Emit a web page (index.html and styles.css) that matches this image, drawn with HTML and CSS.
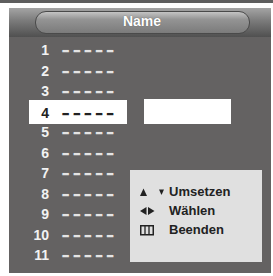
FILE: index.html
```html
<!DOCTYPE html>
<html>
<head>
<meta charset="utf-8">
<link rel="stylesheet" href="styles.css">
</head>
<body>
<div class="topline"></div>
<div class="panel">
  <div class="header"><div class="pill">Name</div></div>
  <div class="body">
    <ul class="list">
      <li class="row"><span class="num">1</span><span class="dash">–––––</span></li>
      <li class="row"><span class="num">2</span><span class="dash">–––––</span></li>
      <li class="row"><span class="num">3</span><span class="dash">–––––</span></li>
      <li class="row sel"><span class="num">4</span><span class="dash">–––––</span></li>
      <li class="row"><span class="num">5</span><span class="dash">–––––</span></li>
      <li class="row"><span class="num">6</span><span class="dash">–––––</span></li>
      <li class="row"><span class="num">7</span><span class="dash">–––––</span></li>
      <li class="row"><span class="num">8</span><span class="dash">–––––</span></li>
      <li class="row"><span class="num">9</span><span class="dash">–––––</span></li>
      <li class="row"><span class="num">10</span><span class="dash">–––––</span></li>
      <li class="row"><span class="num">11</span><span class="dash">–––––</span></li>
    </ul>
    <div class="side">
      <div class="input"></div>
      <div class="legend">
        <div class="lrow">
          <span class="ico">
            <svg width="29" height="10" viewBox="0 0 29 10"><polygon points="0,9 3.5,1.5 7,9" fill="#222"/><polygon points="19,2.5 24,2.5 21.5,8" fill="#222"/></svg>
          </span><span>Umsetzen</span>
        </div>
        <div class="lrow">
          <span class="ico">
            <svg width="29" height="10" viewBox="0 0 29 10"><polygon points="0,5 6.5,1 6.5,9" fill="#222"/><polygon points="8,1 14.5,5 8,9" fill="#222"/></svg>
          </span><span>Wählen</span>
        </div>
        <div class="lrow">
          <span class="ico">
            <svg width="29" height="12" viewBox="0 0 29 12"><rect x="0.75" y="1.75" width="12.5" height="9" fill="none" stroke="#222" stroke-width="1.5"/><line x1="5" y1="2" x2="5" y2="11" stroke="#222" stroke-width="1.3"/><line x1="9" y1="2" x2="9" y2="11" stroke="#222" stroke-width="1.3"/></svg>
          </span><span>Beenden</span>
        </div>
      </div>
    </div>
  </div>
</div>
</body>
</html>
```
FILE: styles.css
```css
html, body {
  margin: 0;
  padding: 0;
  background: #ffffff;
  width: 273px;
  height: 276px;
  overflow: hidden;
  font-family: "Liberation Sans", Arial, sans-serif;
}
.topline {
  height: 3px;
  background: #5e5e5e;
}
.panel {
  margin: 5px 2px 0 9px;
  width: 262px;
  height: 265px;
  background: #646262;
  display: flex;
  flex-direction: column;
}
.header {
  height: 29px;
  background: linear-gradient(to bottom, #a4a4a4 0%, #7a7a7a 45%, #505050 100%);
  display: flex;
  align-items: center;
  justify-content: center;
  padding-left: 4px;
}
.pill {
  width: 213px;
  height: 21px;
  border-radius: 11px;
  border: 1px solid #4a4a4a;
  background: linear-gradient(to bottom, #c4c4c4 0%, #949494 35%, #7b7b7b 100%);
  color: #ffffff;
  font-weight: bold;
  font-size: 14px;
  text-align: center;
  line-height: 19px;
  text-shadow: 0 0 1px #555;
}
.body {
  display: flex;
  flex: 1;
}
.list {
  list-style: none;
  margin: 0;
  padding: 3px 0 0 0;
  width: 121px;
}
.row {
  height: 20.5px;
  line-height: 20.5px;
  display: flex;
  align-items: center;
  color: #f2f2f2;
  font-weight: bold;
  font-size: 14px;
}
.row.sel {
  background: #ffffff;
  color: #222222;
  margin: -1.5px 0 -2px 20px;
  height: 24px;
  width: 98px;
  padding-top: 1.5px;
  box-sizing: border-box;
}
.num {
  width: 40px;
  text-align: right;
  box-sizing: border-box;
}
.sel .num {
  width: 20px;
}
.dash {
  margin-left: 13px;
  font-size: 13px;
  letter-spacing: 3.9px;
  color: #e4e4e4;
  text-shadow: 0 0.7px 0 #e4e4e4;
}
.sel .dash {
  color: #222222;
  text-shadow: 0 0.7px 0 #222222;
}
.side {
  display: flex;
  flex-direction: column;
  width: 132px;
}
.input {
  margin: 62px 0 0 14px;
  width: 87px;
  height: 25px;
  background: #ffffff;
}
.legend {
  margin-top: 46px;
  width: 132px;
  height: 92px;
  background: #e0e0e0;
  box-sizing: border-box;
  padding: 12px 0 0 10px;
  color: #222222;
  font-weight: bold;
  font-size: 13px;
}
.lrow {
  height: 19px;
  line-height: 19px;
  display: flex;
  align-items: center;
}
.ico {
  width: 29px;
  display: flex;
  align-items: center;
}
```
